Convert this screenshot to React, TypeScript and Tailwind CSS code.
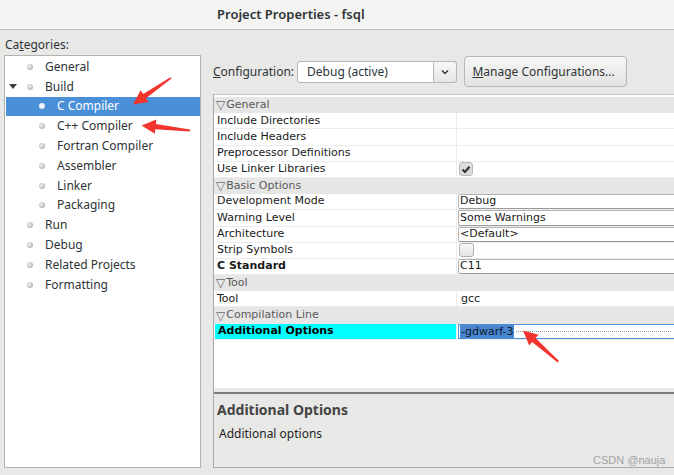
import React from 'react'

type TreeItem = { label: string; level: 0 | 1; expanded?: boolean; selected?: boolean }

const tree: TreeItem[] = [
  { label: 'General', level: 0 },
  { label: 'Build', level: 0, expanded: true },
  { label: 'C Compiler', level: 1, selected: true },
  { label: 'C++ Compiler', level: 1 },
  { label: 'Fortran Compiler', level: 1 },
  { label: 'Assembler', level: 1 },
  { label: 'Linker', level: 1 },
  { label: 'Packaging', level: 1 },
  { label: 'Run', level: 0 },
  { label: 'Debug', level: 0 },
  { label: 'Related Projects', level: 0 },
  { label: 'Formatting', level: 0 },
]

type Row =
  | { kind: 'header'; label: string }
  | {
      kind: 'prop'
      label: string
      bold?: boolean
      value?: 'entry' | 'check' | 'uncheck' | 'text' | 'active'
      text?: string
    }

const rows: Row[] = [
  { kind: 'header', label: 'General' },
  { kind: 'prop', label: 'Include Directories' },
  { kind: 'prop', label: 'Include Headers' },
  { kind: 'prop', label: 'Preprocessor Definitions' },
  { kind: 'prop', label: 'Use Linker Libraries', value: 'check' },
  { kind: 'header', label: 'Basic Options' },
  { kind: 'prop', label: 'Development Mode', value: 'entry', text: 'Debug' },
  { kind: 'prop', label: 'Warning Level', value: 'entry', text: 'Some Warnings' },
  { kind: 'prop', label: 'Architecture', value: 'entry', text: '<Default>' },
  { kind: 'prop', label: 'Strip Symbols', value: 'uncheck' },
  { kind: 'prop', label: 'C Standard', bold: true, value: 'entry', text: 'C11' },
  { kind: 'header', label: 'Tool' },
  { kind: 'prop', label: 'Tool', value: 'text', text: 'gcc' },
  { kind: 'header', label: 'Compilation Line' },
  { kind: 'prop', label: 'Additional Options', bold: true, value: 'active', text: '-gdwarf-3' },
]

function Bullet({ light }: { light?: boolean }) {
  return (
    <span
      className={
        light
          ? 'block w-[6px] h-[6px] rounded-full bg-[radial-gradient(circle_at_40%_40%,#ffffff,#c9d9ee)]'
          : 'block w-[6px] h-[6px] rounded-full bg-[radial-gradient(circle_at_40%_40%,#f2f2f2,#9c9c9c)]'
      }
    />
  )
}

function TreeRow({ item }: { item: TreeItem }) {
  return (
    <div
      className={
        'flex items-center h-[19.8px] ml-[1px] ' +
        (item.selected ? 'bg-[#4a90d9] text-white' : 'text-[#2e3436]')
      }
    >
      <div className={item.level === 0 ? 'w-[21px] flex items-center pl-[3px]' : 'w-[33px]'}>
        {item.expanded && (
          <svg width="8" height="6" viewBox="0 0 8 6">
            <path d="M0 0 L8 0 L4 5 Z" fill="#3a3f41" />
          </svg>
        )}
      </div>
      <Bullet light={item.selected} />
      <span className="ml-[12px]">{item.label}</span>
    </div>
  )
}

function ValueCell({ row }: { row: Extract<Row, { kind: 'prop' }> }) {
  if (row.value === 'entry')
    return (
      <div className="h-full mr-[-4px] bg-white border border-[#b3b3b3] border-b-[#9a9a9a] rounded-[2px] flex items-center pl-[1px]">
        {row.text}
      </div>
    )
  if (row.value === 'check')
    return (
      <div className="h-full flex items-center pl-[1px]">
        <span className="w-[14px] h-[14px] rounded-[3px] bg-[#dcdcdc] border border-[#b8b8b8] flex items-center justify-center">
          <svg width="10" height="9" viewBox="0 0 10 9">
            <path d="M1.5 4.5 L4 7 L8.5 1.8" stroke="#2e3436" strokeWidth="2.2" fill="none" />
          </svg>
        </span>
      </div>
    )
  if (row.value === 'uncheck')
    return (
      <div className="h-full flex items-center pl-[1px]">
        <span className="w-[15px] h-[14px] rounded-[3px] bg-[linear-gradient(#f8f8f8,#e4e4e4)] border border-[#b0b0b0]" />
      </div>
    )
  if (row.value === 'text') return <div className="h-full flex items-center pl-[3px]">{row.text}</div>
  if (row.value === 'active')
    return (
      <div className="h-full mr-[-4px] bg-white border border-[#4a90d9] flex items-center pl-[1px] pr-[6px]">
        <span className="bg-[#4a86cf] text-[#0d1a2e] px-[1px] leading-[13px]">{row.text}</span>
        <span className="flex-1 ml-[2px] border-t border-dotted border-[#9a9a9a]" />
      </div>
    )
  return null
}

function PropRow({ row }: { row: Row }) {
  if (row.kind === 'header')
    return (
      <div className="h-[16.2px] bg-[#e6e6e6] flex items-center pl-[2px] text-[#5a5a5a]">
        <span className="text-[12px] leading-[12px] text-[#6a6a6a] mr-[1px]">▽</span>
        {row.label}
      </div>
    )
  const active = row.value === 'active'
  return (
    <div className="h-[16.2px] flex border-b border-[#ececec] bg-white">
      <div
        className={
          'shrink-0 flex items-center pl-[3px] border-r border-[#ececec] ' +
          (active ? 'bg-[#00ffff] ml-[1px] w-[242px] text-black' : 'w-[243px] text-[#1a1a1a]') +
          (row.bold ? ' font-bold' : '')
        }
      >
        {row.label}
      </div>
      <div className="flex-1 pl-[1px] text-[#1a1a1a]">
        <ValueCell row={row} />
      </div>
    </div>
  )
}

function Arrows() {
  return (
    <svg className="absolute inset-0 pointer-events-none" width="674" height="475" viewBox="0 0 674 475">
      <g fill="#f2352c">
        <polygon points="171.5,78.6 146,98.2 148.6,101.9 133,104.5 140.6,90.3 143.2,94 170.5,77.2" />
        <polygon points="189.9,131.6 155.3,129.3 154.8,133.8 141.6,125.4 156.4,119.4 155.9,123.9 190.1,129.6" />
        <polygon points="557.7,362.4 532.1,341.9 529.2,345.4 523,330.5 538.6,334.8 535.5,338.1 559,360.9" />
      </g>
    </svg>
  )
}

export default function App() {
  return (
    <div className="relative w-[674px] h-[475px] overflow-hidden bg-[#e8e8e7] font-['Noto_Sans',sans-serif] text-[#2e3436]">
      {/* Title bar */}
      <div className="h-[30px] bg-[#f4f4f3] border-b border-[#bdbdbb] flex items-center pl-[217px] text-[13px] font-semibold text-[#2e3436]">
        Project Properties - fsql
      </div>

      <div className="flex">
        {/* Categories */}
        <div className="w-[202px] shrink-0 pl-[4px] pt-[7px]">
          <div className="h-[18px] text-[12px] leading-[16px] pl-[1px]">
            Ca<span className="underline">t</span>egories:
          </div>
          <div className="w-[197px] h-[413px] bg-white border border-[#b2b2b2] pt-[1px] text-[12px]">
            {tree.map((t) => (
              <TreeRow key={t.label} item={t} />
            ))}
          </div>
        </div>

        {/* Properties */}
        <div className="flex-1 pl-[11px]">
          <div className="pt-[26px] h-[57px] flex items-start text-[12px]">
            <div className="h-[31px] flex items-center">
              <span>
                <span className="underline">C</span>onfiguration:
              </span>
              <div className="ml-[3px] flex h-[22px]">
                <div className="w-[137px] bg-white border border-[#b6b6b3] rounded-l-[3px] flex items-center pl-[9px]">
                  Debug (active)
                </div>
                <div className="w-[23px] border border-l-0 border-[#b6b6b3] rounded-r-[3px] bg-[linear-gradient(#f7f7f7,#e6e6e6)] flex items-center justify-center">
                  <svg width="8" height="6" viewBox="0 0 8 6">
                    <path d="M1 1.5 L4 4.5 L7 1.5" stroke="#2e3436" strokeWidth="1.4" fill="none" />
                  </svg>
                </div>
              </div>
              <div className="ml-[7px] w-[163px] h-[31px] border border-[#b6b6b3] rounded-[4px] bg-[linear-gradient(#f6f6f5,#e3e3e1)] flex items-center justify-center pr-[4px]">
                <span>
                  <span className="underline">M</span>anage Configurations...
                </span>
              </div>
            </div>
          </div>

          <div className="mt-[7px] h-[374px] border-l border-b border-[#a9a9a9] flex flex-col">
            <div className="h-[294px] bg-white border-t border-[#c4c4c4] pt-[2px] font-['DejaVu_Sans',sans-serif] text-[11px]">
              {rows.map((r, i) => (
                <PropRow key={i} row={r} />
              ))}
            </div>
            <div className="h-[4px]" />
            <div className="flex-1 border-t-2 border-[#7c7c7c] pl-[3px] pt-[7px]">
              <div className="text-[14px] font-bold text-[#444] leading-[18px]">Additional Options</div>
              <div className="text-[12px] pl-[2px] mt-[7px] leading-[16px] text-[#1f1f1f]">Additional options</div>
            </div>
          </div>
        </div>
      </div>

      <div className="absolute left-[593px] top-[452px] text-[11px] text-[#a3a3a3] font-['Liberation_Sans',sans-serif]">
        CSDN @nauja
      </div>
      <Arrows />
    </div>
  )
}
